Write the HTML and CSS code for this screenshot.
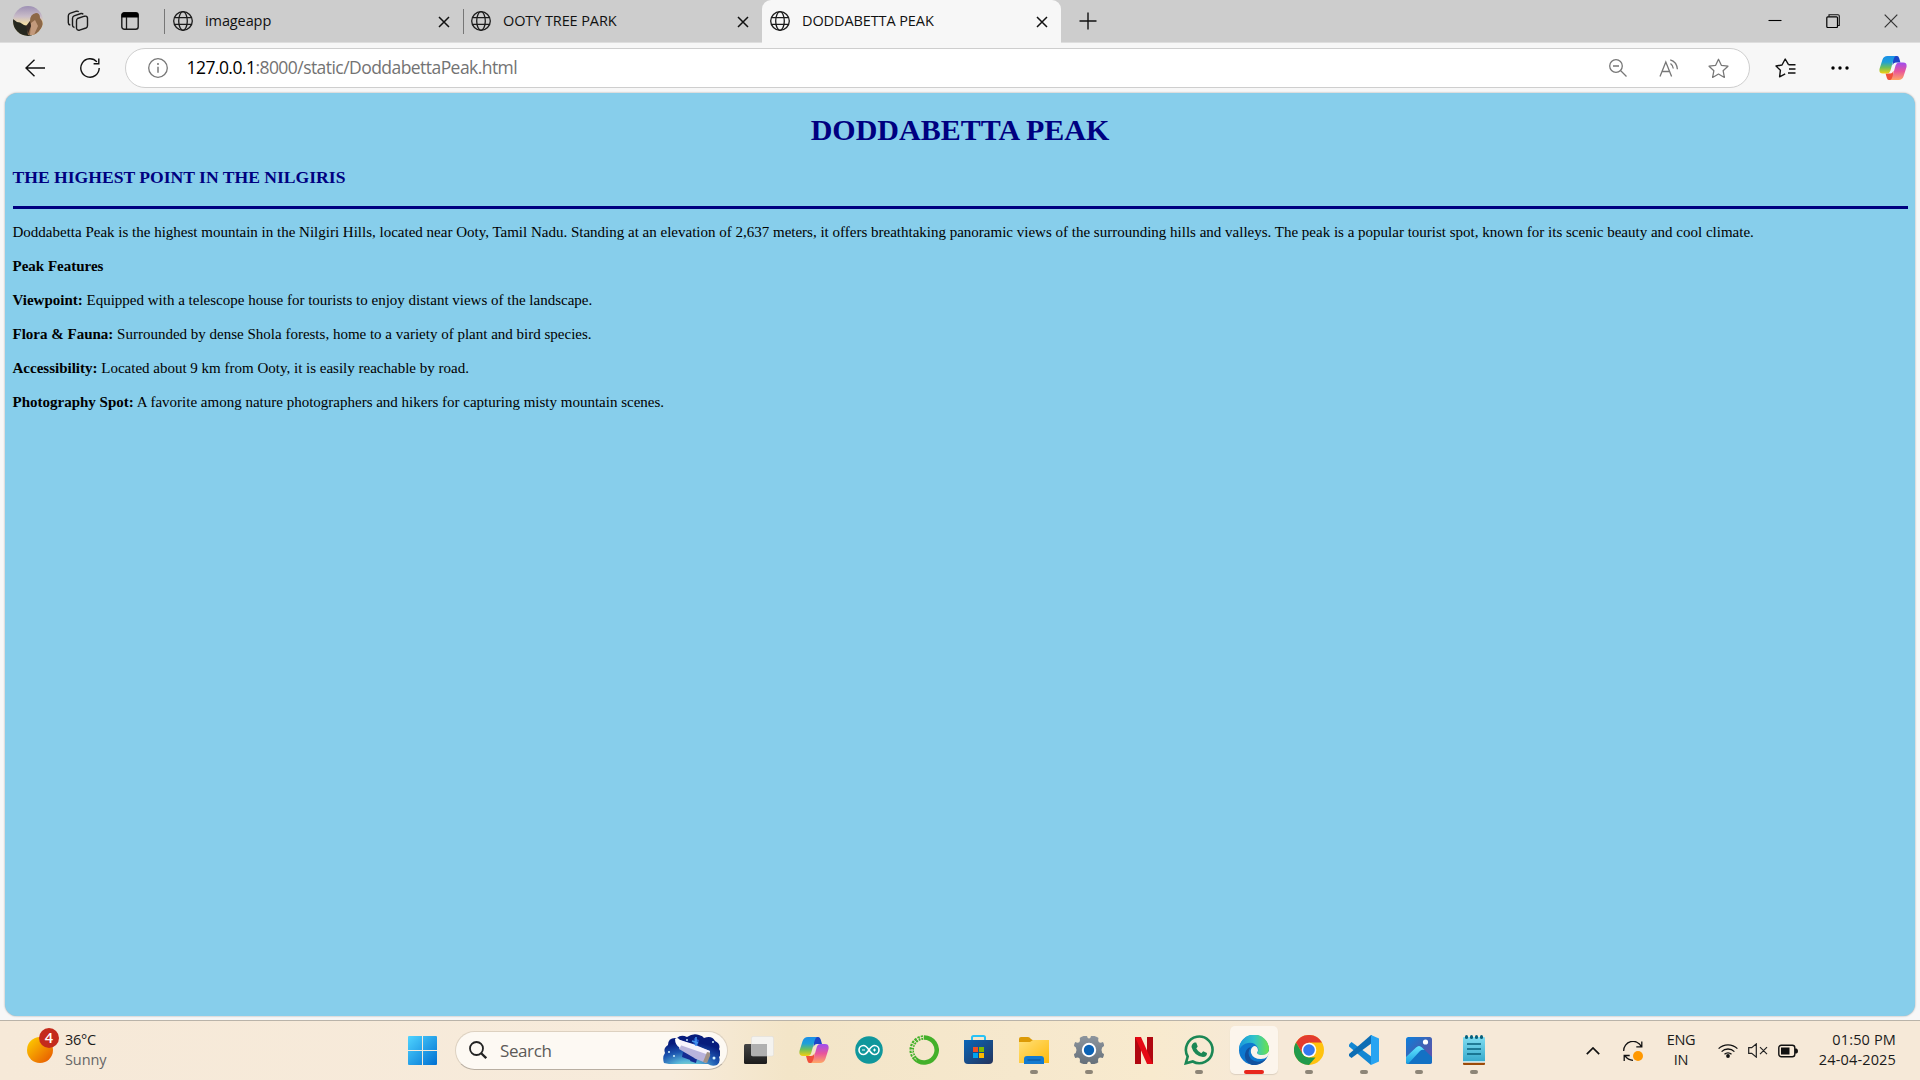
FILE: index.html
```html
<!DOCTYPE html>
<html lang="en">
<head>
<meta charset="utf-8">
<title>DODDABETTA PEAK</title>
<link rel="stylesheet" href="styles.css">
</head>
<body>
<svg width="0" height="0" class="defs">
  <defs>
    <linearGradient id="cpA" x1="0" y1="0" x2="0" y2="1"><stop offset="0" stop-color="#1a8fe8"/><stop offset=".35" stop-color="#1fa0d8"/><stop offset=".65" stop-color="#6cbf5c"/><stop offset="1" stop-color="#f5cf10"/></linearGradient>
    <linearGradient id="cpB" x1="0" y1="0" x2="0" y2="1"><stop offset="0" stop-color="#9d4df0"/><stop offset=".5" stop-color="#e8559c"/><stop offset="1" stop-color="#ffa765"/></linearGradient>
    <linearGradient id="win" x1="0" y1="0" x2="1" y2="1"><stop offset="0" stop-color="#4fd4ff"/><stop offset="1" stop-color="#0070d2"/></linearGradient>
    <linearGradient id="sun" x1="0" y1="0" x2="1" y2="1"><stop offset="0" stop-color="#ffd400"/><stop offset="1" stop-color="#e65100"/></linearGradient>
    <linearGradient id="store" x1="0" y1="0" x2="1" y2="1"><stop offset="0" stop-color="#0a66b8"/><stop offset="1" stop-color="#25345c"/></linearGradient>
    <linearGradient id="folder" x1="0" y1="0" x2="1" y2="1"><stop offset="0" stop-color="#ffe079"/><stop offset="1" stop-color="#ffb90a"/></linearGradient>
    <linearGradient id="gear" x1="0" y1="0" x2="0" y2="1"><stop offset="0" stop-color="#8d959d"/><stop offset="1" stop-color="#66707a"/></linearGradient>
    <linearGradient id="edgeTop" x1="0" y1="0" x2="1" y2="0"><stop offset="0" stop-color="#1a96dd"/><stop offset=".5" stop-color="#30c3cb"/><stop offset="1" stop-color="#6ce24a"/></linearGradient>
    <linearGradient id="photos" x1="0" y1="0" x2="1" y2="1"><stop offset="0" stop-color="#0c80dc"/><stop offset=".5" stop-color="#4061b4"/><stop offset="1" stop-color="#6a4cae"/></linearGradient>
    <linearGradient id="hill" x1="0" y1="0" x2="0" y2="1"><stop offset="0" stop-color="#66e6ff"/><stop offset="1" stop-color="#189ee0"/></linearGradient>
    <linearGradient id="note" x1="0" y1="0" x2="0" y2="1"><stop offset="0" stop-color="#7fdcf0"/><stop offset="1" stop-color="#35a9cc"/></linearGradient>
    <linearGradient id="tv" x1="0" y1="0" x2="0" y2="1"><stop offset="0" stop-color="#454545"/><stop offset="1" stop-color="#1c1c1c"/></linearGradient>
    <linearGradient id="sky" x1="0" y1="0" x2="0" y2="1"><stop offset="0" stop-color="#9d90b4"/><stop offset=".35" stop-color="#c9bcc8"/><stop offset=".6" stop-color="#f0dca4"/></linearGradient>
    <radialGradient id="space" cx=".42" cy="1.1" r=".85"><stop offset="0" stop-color="#9fe8c4"/><stop offset=".3" stop-color="#58b6d8"/><stop offset=".65" stop-color="#1c55b0"/><stop offset="1" stop-color="#071c7c"/></radialGradient>
    <symbol id="globe" viewBox="0 0 20 20"><g fill="none" stroke="#1b1b1b" stroke-width="1.3"><circle cx="10" cy="10" r="9.3"/><ellipse cx="10" cy="10" rx="4.3" ry="9.3"/><path d="M1.6 6.6h16.8M1.6 13.4h16.8"/></g></symbol>
    <symbol id="x" viewBox="0 0 12 12"><path d="M1 1l10 10M11 1L1 11" stroke="#111" stroke-width="1.500"/></symbol>
    <symbol id="star" viewBox="0 0 20 20"><path d="M10 1.200l2.700 5.800 6.300.8-4.600 4.300 1.200 6.400L10 15.300l-5.600 3.200 1.200-6.400L1 7.800 7.300 7z" fill="none" stroke="#777" stroke-width="1.200" stroke-linejoin="round"/></symbol>
    <symbol id="copilot" viewBox="0 0 30 28">
      <path d="M15 1h4.500Q21 1 21.700 3.500L23 8h-5q-2.500 0-3.500 3z" fill="#1d45c8"/>
      <path d="M15 27h-4.500Q9 27 8.300 24.500L7 20h5q2.500 0 3.500-3z" fill="#f0503a"/>
      <path d="M9 1h9q-1.500.6-2.300 3.400L12.200 17Q11.300 20 8.500 20H4Q-.6 20 .6 14.500L3.600 5Q5 1 9 1z" fill="url(#cpA)"/>
      <path d="M21 27h-9q1.500-.6 2.300-3.400L17.800 11Q18.700 8 21.500 8H26q4.600 0 3.400 5.500L26.400 23Q25 27 21 27z" fill="url(#cpB)"/>
    </symbol>
  </defs>
</svg>

<header class="tabbar">
  <div class="tools">
    <svg class="avatar" viewBox="0 0 30 30"><clipPath id="av"><circle cx="15" cy="15" r="15"/></clipPath><g clip-path="url(#av)"><rect width="30" height="30" fill="url(#sky)"/><path d="M0 13l4 3 3 .5 4 2.500 4 1 4 1v9H0z" fill="#26281f"/><path d="M17 15q0-7 6-8 4 0 4 5 3 3 3 8l-6 9h-9q-2-5 2-14z" fill="#8d6848"/><path d="M18 17l4-3 3 6-4 9h-4z" fill="#c39a7c"/><path d="M13 20l4-5 1 5-3 8z" fill="#352a22"/></g></svg>
    <svg class="workspaces" viewBox="0 0 22 22"><g fill="none" stroke="#1b1b1b" stroke-width="1.400" stroke-linejoin="round"><path d="M10.500 8.500l7-2.300q2.500-.6 3 1.800v7.500q0 1.800-1.500 2.500l-6.500 2.200q-2.500.5-3-1.800v-7.500q0-1.800 1-2.400z"/><path d="M7.500 17.500q-2-.3-2-2.300V8.500q0-1.900 1.600-2.600l6.900-2.400q1.500-.3 2.200.8"/><path d="M3.300 15q-2-.3-2-2.300V6q0-1.900 1.600-2.600l6.500-2.200q1.500-.3 2.300.6"/></g></svg>
    <svg class="vertical-tabs" viewBox="0 0 18 18"><rect x=".8" y=".8" width="16.400" height="16.400" rx="2.500" fill="none" stroke="#1b1b1b" stroke-width="1.400"/><path d="M.5 5.500V3q0-2.500 2.500-2.500h12q2.500 0 2.500 2.500v2.500z" fill="#000"/><path d="M5.500 5v12" stroke="#1b1b1b" stroke-width="1.300"/></svg>
  </div>
  <div class="tab first"><svg class="globe"><use href="#globe"/></svg><span>imageapp</span><svg class="close"><use href="#x"/></svg></div>
  <div class="tab"><svg class="globe"><use href="#globe"/></svg><span>OOTY TREE PARK</span><svg class="close"><use href="#x"/></svg></div>
  <div class="tab active"><svg class="globe"><use href="#globe"/></svg><span>DODDABETTA PEAK</span><svg class="close"><use href="#x"/></svg></div>
  <svg class="plus" viewBox="0 0 18 18"><path d="M9 .5v17M.5 9h17" stroke="#111" stroke-width="1.400"/></svg>
  <div class="controls">
    <svg viewBox="0 0 14 14"><path d="M.5 6.500h13" stroke="#000" stroke-width="1.100"/></svg>
    <svg viewBox="0 0 14 14"><path d="M3 2.500V.8h9q1.300 0 1.300 1.200v9.500h-1.500" fill="none" stroke="#111" stroke-width="1.100"/><rect x=".8" y="2.800" width="10.700" height="10.700" rx="1" fill="none" stroke="#000" stroke-width="1.200"/></svg>
    <svg viewBox="0 0 14 14"><path d="M.7.700l12.600 12.600M13.300.700L.7 13.300" stroke="#333" stroke-width="1.200"/></svg>
  </div>
</header>

<nav class="toolbar">
  <svg class="back" viewBox="0 0 20 18"><path d="M20 9H1M9.500.8L1 9l8.500 8.200" fill="none" stroke="#111" stroke-width="1.400"/></svg>
  <svg class="reload" viewBox="0 0 20 20"><path d="M19.200 10a9.200 9.200 0 1 1-2.300-6.100M18.800.5v5.200h-5.200" fill="none" stroke="#111" stroke-width="1.400"/></svg>
  <div class="address">
    <svg class="info" viewBox="0 0 20 20"><circle cx="10" cy="10" r="9.300" fill="none" stroke="#777" stroke-width="1.300"/><path d="M10 8.800v6" stroke="#666" stroke-width="1.300"/><circle cx="10" cy="6" r=".9" fill="#666"/></svg>
    <span class="url"><b>127.0.0.1</b>:8000/static/DoddabettaPeak.html</span>
    <div class="actions">
      <svg width="18" height="18" viewBox="0 0 18 18"><g fill="none" stroke="#777" stroke-width="1.300"><circle cx="7" cy="7" r="6.300"/><path d="M4 7h6M11.500 11.500l6 6"/></g></svg>
      <svg width="20" height="18" viewBox="0 0 20 18"><g fill="none" stroke="#777" stroke-width="1.300"><path d="M1 17.500L6.800 3l5.800 14.500M3 12.500h7.500M11.500 4.500q2.500 1.800 2.800 5M11.200.9q6.500 1.700 7.200 9.400"/></g></svg>
      <svg width="21" height="21"><use href="#star"/></svg>
    </div>
  </div>
  <svg class="favs" viewBox="0 0 21 20"><path d="M13.500 6.700L10.200 1 7 7 1 8l4.400 4.300L4.600 18.800l5.600-3M13.500 6.700h7M14 11h6.500M13 15h7.500" fill="none" stroke="#111" stroke-width="1.400" stroke-linejoin="round"/></svg>
  <svg class="dots" viewBox="0 0 18 4"><circle cx="2" cy="2" r="1.700"/><circle cx="9" cy="2" r="1.700"/><circle cx="16" cy="2" r="1.700"/></svg>
  <svg class="cop"><use href="#copilot"/></svg>
</nav>

<main class="page">
  <h1>DODDABETTA PEAK</h1>
  <h3>THE HIGHEST POINT IN THE NILGIRIS</h3>
  <hr>
  <p>Doddabetta Peak is the highest mountain in the Nilgiri Hills, located near Ooty, Tamil Nadu. Standing at an elevation of 2,637 meters, it offers breathtaking panoramic views of the surrounding hills and valleys. The peak is a popular tourist spot, known for its scenic beauty and cool climate.</p>
  <p><b>Peak Features</b></p>
  <p><b>Viewpoint:</b> Equipped with a telescope house for tourists to enjoy distant views of the landscape.</p>
  <p><b>Flora &amp; Fauna:</b> Surrounded by dense Shola forests, home to a variety of plant and bird species.</p>
  <p><b>Accessibility:</b> Located about 9 km from Ooty, it is easily reachable by road.</p>
  <p><b>Photography Spot:</b> A favorite among nature photographers and hikers for capturing misty mountain scenes.</p>
</main>

<footer class="taskbar">
  <div class="weather">
    <div class="sun"><svg viewBox="0 0 26 26"><circle cx="13" cy="13" r="13" fill="url(#sun)"/></svg><span class="badge">4</span></div>
    <div class="lines"><span>36°C</span><span class="muted">Sunny</span></div>
  </div>
  <div class="launch">
    <svg class="start" viewBox="0 0 29 29"><path d="M1 0h13v14H0V1q0-1 1-1zM15 0h13q1 0 1 1v13H15zM0 15h14v14H1q-1 0-1-1zM15 15h14v13q0 1-1 1H15z" fill="url(#win)"/></svg>
    <div class="search">
      <svg class="lens" viewBox="0 0 18 18"><circle cx="7.500" cy="7.500" r="6.500" fill="none" stroke="#222" stroke-width="1.800"/><path d="M12.200 12.200l5 5" stroke="#222" stroke-width="2.300"/></svg>
      <span>Search</span>
      <svg class="scope" viewBox="0 0 57 32"><path d="M1 29q-2-6 1-10-2-5 3-8 0-8 9-7 4-4 10-1 6-4 12-2 4 1 5 3 8-3 11 3 6 3 4 8 3 5 0 8 2 5-2 8-5 2-9-1H6z" fill="url(#space)"/><path d="M31 4l5 2-2 8-4-1z" fill="#1d4fc4"/><path d="M20 18l12 4-2 5-11-4zM28 23l6 2-1 4-6-2z" fill="#152b92"/><path d="M17 6l13 5 17 6-4 12-10-4-17-10z" fill="#b9b4dc"/><path d="M12 5q2-2 4 0l3 3-2 6q-5-3-5-9z" fill="#fff"/><path d="M17 6l13 4 17 7-1 4-29-10z" fill="#f7f3fb"/><path d="M44 18q4 0 3 4l-3 7-4-1z" fill="#a29285"/><path d="M29 7l6 2M33 3v9" stroke="#4494ee" stroke-width="1.500"/><g fill="#d5f4ff"><circle cx="24" cy="6" r=".9"/><circle cx="50" cy="8" r="1"/><circle cx="6" cy="18" r="1"/><circle cx="11" cy="22" r="1"/><circle cx="51" cy="24" r="1.500"/></g></svg>
    </div>
    <div class="app"><svg width="30" height="28" viewBox="0 0 30 28"><rect y="8" width="23" height="20" rx="1.500" fill="url(#tv)"/><rect x="7.500" y=".5" width="22" height="19.500" rx="1.500" fill="#f4f4f4" fill-opacity=".9" stroke="#ddd" stroke-width=".5"/><path d="M7.500 8H23v12H7.500z" fill="#b0b0b0"/></svg></div>
    <div class="app"><svg width="30" height="28"><use href="#copilot"/></svg></div>
    <div class="app"><svg width="28" height="28" viewBox="0 0 28 28"><circle cx="14" cy="14" r="13.800" fill="#10979c"/><path d="M14 14Q11 9.500 8.500 9.500a4.500 4.500 0 0 0 0 9Q11 18.500 14 14q3-4.500 5.500-4.500a4.500 4.500 0 0 1 0 9Q17 18.500 14 14z" fill="none" stroke="#fff" stroke-width="1.600"/><path d="M7 14h3M18 14h3M19.500 12.500v3" stroke="#fff"/></svg></div>
    <div class="app"><svg width="30" height="30" viewBox="0 0 30 30"><path d="M15 2.500a12.500 12.500 0 1 1-9 21" fill="none" stroke="#43b02a" stroke-width="4.500"/><path d="M6 23.500A12.500 12.500 0 0 1 15 2.500" fill="none" stroke="#43b02a" stroke-width="4.500" stroke-dasharray="2.200 1"/><path d="M7.500 25A13 13 0 0 1 14 2.300" fill="none" stroke="#f5e9d0" stroke-width="1" stroke-dasharray="3 1.500"/></svg></div>
    <div class="app"><svg width="29" height="30" viewBox="0 0 29 30"><path d="M8 7V2.500Q8 1 9.500 1h10Q21 1 21 2.500V7" fill="none" stroke="#28c2f5" stroke-width="2"/><path d="M0 5h29v20q0 4-4 4H4q-4 0-4-4z" fill="url(#store)"/><path d="M9 12h5v5H9z" fill="#f25022"/><path d="M15 12h5v5h-5z" fill="#7fba00"/><path d="M9 18h5v5H9z" fill="#00a4ef"/><path d="M15 18h5v5h-5z" fill="#ffb900"/></svg></div>
    <div class="app run"><svg width="30" height="28" viewBox="0 0 30 28"><path d="M0 3q0-2 2-2h7q1.500 0 3 2l1.500 1H28q2 0 2 2v5H0z" fill="#dc9a06"/><path d="M0 6h11l3-2h16v23H0z" fill="url(#folder)"/><path d="M5 28v-5q0-3 3-3h14q3 0 3 3v5z" fill="#137ad0"/><path d="M8.500 24h13" stroke="#0a4f93" stroke-width="1"/></svg></div>
    <div class="app run"><svg width="30" height="30" viewBox="-15 -15 30 30"><path d="M-5.500-14h3.500q.5 2.500 2 2.500t2-2.500h3.500q3 1 4 2-.8 3 .5 4.200 1.400 1 4-.2 1.200 2 1 4Q12.500-3 12.500 0t2.500 4q0 2-1.200 4-2.600-1-4 0-1.200 1.200-.5 4.200-1 1-4 1.800H2q-.5-2.500-2-2.500T-2 14h-3.500q-2.800-.8-3.800-1.800.7-3-.5-4.200-1.400-1-4 0Q-15 6-15 4q2.500-1 2.500-4T-15-4q0-2 1.200-4 2.600 1.200 4 .2 1.200-1.200.5-4.200 1-1 3.800-2z" fill="url(#gear)"/><circle r="7.200" fill="#fff"/><circle r="5.200" fill="#0b62b5"/></svg></div>
    <div class="app"><svg width="18" height="27" viewBox="0 0 18 27"><path d="M0 0h6v27H0zM12 0h6v27h-6z" fill="#b00710"/><path d="M0 0h6l12 27h-6z" fill="#e50914"/></svg></div>
    <div class="app run"><svg width="30" height="30" viewBox="0 0 30 30"><path d="M1.800 28.300L3.700 21.500A13.300 13.300 0 1 1 8.800 26.500z" fill="none" stroke="#1b8755" stroke-width="2.600"/><path d="M10.500 7.500h1.700l1.500 4-1.400 2q1.700 3.300 5 4.700l1.900-2 3.800 1.900q0 3.800-4 4-9-1.100-11.500-10-.1-3.100 3-4.600z" fill="#1b8755"/></svg></div>
    <div class="app run current"><svg width="30" height="30" viewBox="0 0 30 30"><circle cx="15" cy="15" r="15" fill="#0e78cf"/><path d="M0 15A15 15 0 0 1 30 14q0 6-7 6-4 0-5-2 2-2 1-5-3-6-10-5-6 1-9 7z" fill="url(#edgeTop)"/><path d="M12 12q-5 6 0 12 7 6 16-1-6 8-15 7-8-3-7-11 1-6 6-7z" fill="#12519e"/><path d="M18 18q0-1 1-2 0-5-4-5-4 2-3 7 2 6 10 6 4 0 6-2l2-3v-3q-2 4-7 4-4 0-5-2z" fill="#fbf3ea"/></svg></div>
    <div class="app run"><svg width="30" height="30" viewBox="0 0 30 30"><circle cx="15" cy="15" r="15" fill="#ffc20e"/><path d="M2 7.500A15 15 0 0 1 28 7.500H15L8.500 18.750z" fill="#e33b2e"/><path d="M2 7.500l6.500 11.250Q11 22.500 15 22.500h6.500L15 30A15 15 0 0 1 2 7.500z" fill="#219a4b"/><circle cx="15" cy="15" r="7.300" fill="#fff"/><circle cx="15" cy="15" r="5.800" fill="#3478ef"/></svg></div>
    <div class="app run"><svg width="30" height="30" viewBox="0 0 30 30"><path d="M2.500 7L0 9.500v2L22 30l1-8z" fill="#1387d3"/><path d="M0 19v2l2.500 2L23 8V0h-1z" fill="#0d6db4"/><path d="M22 0l8 3.500v23L22 30V0z" fill="#27a4f2"/></svg></div>
    <div class="app run"><svg width="26" height="27" viewBox="0 0 26 27"><clipPath id="ph"><rect width="26" height="27" rx="2.500"/></clipPath><g clip-path="url(#ph)"><rect width="26" height="27" fill="url(#photos)"/><path d="M0 21l10-10.500q3-3 6 0L27 21v6H0z" fill="#1371c4"/><path d="M0 20l10-9.500q3-3 6 0l2.500 2.500Q16 12 14 14L2 27H0z" fill="url(#hill)"/></g><circle cx="19.500" cy="5" r="2.600" fill="#fff"/></svg></div>
    <div class="app run"><svg width="22" height="30" viewBox="0 0 22 30"><path d="M0 27h22v2q0 1-1 1H1q-1 0-1-1z" fill="#9c4a08"/><path d="M0 3q0-1 1-1h20q1 0 1 1v24H0z" fill="url(#note)"/><path d="M0 27h22" stroke="#e8f8fc" stroke-width="1.500"/><path d="M4 9h14M4 14h14M4 19h14" stroke="#08607c" stroke-width="1.700"/><g fill="#08607c"><rect x="2" width="3" height="4" rx="1.500"/><rect x="7" width="3" height="4" rx="1.500"/><rect x="12" width="3" height="4" rx="1.500"/><rect x="17" width="3" height="4" rx="1.500"/></g></svg></div>
  </div>
  <div class="tray">
    <svg class="chev" viewBox="0 0 14 8"><path d="M.8 7.200L7 1l6.200 6.200" fill="none" stroke="#111" stroke-width="1.700"/></svg>
    <svg class="sync" viewBox="0 0 20 20"><path d="M.7 10A9.300 9.300 0 0 1 18.300 5.500M18.800.5v5.300h-5.500M10 19.300Q5 19 2 14.800M1.200 20v-5.500h5.500" fill="none" stroke="#111" stroke-width="1.300"/><circle cx="15" cy="15" r="5" fill="#ff9800"/></svg>
    <div class="lines lang"><span>ENG</span><span>IN</span></div>
    <svg class="wifi" viewBox="0 0 20 15"><g fill="none" stroke="#111" stroke-width="1.300"><path d="M.6 5.600a13.500 13.500 0 0 1 18.800 0M3.600 8.600a9.200 9.200 0 0 1 12.800 0M6.500 11.300a5.200 5.200 0 0 1 7 0"/></g><circle cx="10" cy="13" r="1.900" fill="#111"/></svg>
    <svg class="vol" viewBox="0 0 20 15"><path d="M.7 4.700h3L8.300.9v13.200l-4.600-3.800h-3zM12 4.200l7 7M19 4.200l-7 7" fill="none" stroke="#222" stroke-width="1.200"/></svg>
    <svg class="batt" viewBox="0 0 20 14"><rect x=".8" y="1.300" width="16" height="11.400" rx="2.500" fill="none" stroke="#111" stroke-width="1.400"/><rect x="3" y="3.500" width="8.500" height="7" fill="#111"/><path d="M17 4.500h1.500q1.500.5 1.500 2.500t-1.500 2.500H17z" fill="#111"/></svg>
    <div class="lines clock"><span>01:50 PM</span><span>24-04-2025</span></div>
  </div>
</footer>
</body>
</html>
```
FILE: styles.css
```css
* { box-sizing: border-box; }
body {
  margin: 0;
  width: 1920px;
  height: 1080px;
  overflow: hidden;
  display: flex;
  flex-direction: column;
  background: #f7f7f7;
  font-family: "Open Sans", "Noto Sans", sans-serif;
  color: #1b1b1b;
}
svg { display: block; flex: none; }
.defs { position: absolute; }

/* Tab strip */
.tabbar { height: 43px; flex: none; display: flex; background: #cdcdcd; border-bottom: 1px solid #dedede; }
.tools { width: 164px; display: flex; align-items: center; padding-left: 13px; }
.avatar { width: 30px; height: 30px; }
.workspaces { width: 22px; height: 22px; margin-left: 23.5px; }
.vertical-tabs { width: 18px; height: 18px; margin-left: 32.5px; }
.tab { width: 299px; height: 43px; display: flex; align-items: center; padding: 0 13px 1px 8px; font-size: 14.5px; color: #111; background: linear-gradient(#777, #777) 0 9px / 1px 25px no-repeat; }
.tab.first { padding-left: 9px; }
.tab span { flex: 1; margin-left: 12px; padding-bottom: 2px; letter-spacing: -.1px; }
.globe { width: 20px; height: 20px; }
.close { width: 12px; height: 12px; margin-top: 2px; }
.tab.active { background: #f7f7f7; border-radius: 9px 9px 0 0; }
.plus { width: 18px; height: 18px; margin: 12px 0 0 18px; }
.controls { margin: 14px 22px 0 auto; display: flex; gap: 44px; }
.controls svg { width: 14px; height: 14px; }

/* Navigation bar */
.toolbar { height: 50px; flex: none; display: flex; align-items: center; padding: 0 13px 0 25px; }
.back { width: 20px; height: 18px; }
.reload { width: 20px; height: 20px; margin-left: 35px; }
.address { width: 1625px; height: 40px; margin-left: 25px; padding: 0 20px 0 22px; display: flex; align-items: center; background: #fff; border: 1px solid #cecece; border-radius: 20px; }
.info { width: 20px; height: 20px; }
.url { margin-left: 18.5px; padding-bottom: 2px; font-size: 17.5px; letter-spacing: -.55px; color: #737373; white-space: nowrap; }
.url b { font-weight: 400; color: #000; }
.actions { margin-left: auto; display: flex; align-items: center; gap: 29px; }
.actions svg:first-child { margin-right: 3px; }
.favs { width: 21px; height: 20px; margin-left: 25px; }
.dots { width: 18px; height: 4px; margin-left: 35px; }
.cop { width: 28px; height: 26px; margin-left: auto; }

/* Web page */
.page { width: 1910px; height: 923px; margin: 0 5px; flex: none; padding: 0 7.500px; background: #87ceeb; border-radius: 12px; box-shadow: 0 0 2px #999; font-family: "Liberation Serif", "Times New Roman", serif; font-size: 15px; color: #000; display: flow-root; }
.page h1 { margin: 19px 0 0; font-size: 30px; line-height: 36px; text-align: center; color: #000080; }
.page h3 { margin: 18px 0 0; font-size: 17.6px; line-height: 22px; color: #000080; }
.page hr { margin: 18px 0 14px; border: 0; height: 3px; background: #000080; }
.page p { margin: 0 0 16px; line-height: 18px; white-space: nowrap; }

/* Taskbar */
.taskbar { height: 60px; margin-top: 4px; flex: none; display: flex; align-items: center; border-top: 1px solid #b9b3a9; background: linear-gradient(90deg, #f6e9d8 0, #f7ebdb 35%, #f3e5c8 41%, #f6e8cd 53%, #f8eace 60%, #f6e9d8 66%, #f6e9d8 100%); }
.lines { display: flex; flex-direction: column; padding-bottom: 2px; font-size: 14.5px; line-height: 20px; letter-spacing: -.3px; }
.weather { width: 408px; padding-left: 27px; display: flex; align-items: center; }
.weather .muted { letter-spacing: -.1px; }
.sun { position: relative; width: 26px; height: 26px; margin: -2px 12px 0 0; }
.badge { position: absolute; left: 12px; top: -9px; width: 20px; height: 20px; border-radius: 50%; background: #c42b1c; color: #fff; font-size: 14.5px; font-weight: 600; line-height: 20px; text-align: center; }
.muted { color: #666; }
.launch { display: flex; align-items: center; height: 100%; padding-bottom: 1px; }
.start { width: 29px; height: 29px; }
.search { width: 273px; height: 39px; margin: 0 3px 0 18px; padding: 0 7px 0 13px; display: flex; align-items: center; background: #fdf9f3; border: 1px solid #ddd1c0; border-bottom-color: #b9afa2; border-radius: 20px; color: #5c5a57; font-size: 17px; }
.lens { width: 18px; height: 18px; }
.search span { margin-left: 13px; letter-spacing: -.4px; }
.scope { width: 57px; height: 32px; margin-left: auto; }
.app { position: relative; width: 55px; height: 48px; display: grid; place-items: center; }
.app svg { position: relative; z-index: 1; }
.current::before { content: ""; position: absolute; inset: 0 3.500px; border-radius: 5px; background: #fcf5ec; box-shadow: 0 1px 1px #dccfbf; }
.run::after { content: ""; position: absolute; z-index: 1; left: 23.500px; bottom: 0; width: 8px; height: 4px; border-radius: 2px; background: #8d8577; }
.current::after { left: 17.500px; width: 20px; background: #e8261c; }
.tray { margin-left: auto; padding-right: 24px; display: flex; align-items: center; }
.chev { width: 14px; height: 8px; }
.sync { width: 20px; height: 20px; margin-left: 23px; }
.lang { width: 40px; margin-left: 18px; text-align: center; }
.wifi { width: 20px; height: 15px; margin-left: 17px; }
.vol { width: 20px; height: 15px; margin-left: 10px; }
.batt { width: 20px; height: 14px; margin-left: 10px; }
.clock { width: 98px; text-align: right; letter-spacing: .15px; }
```
